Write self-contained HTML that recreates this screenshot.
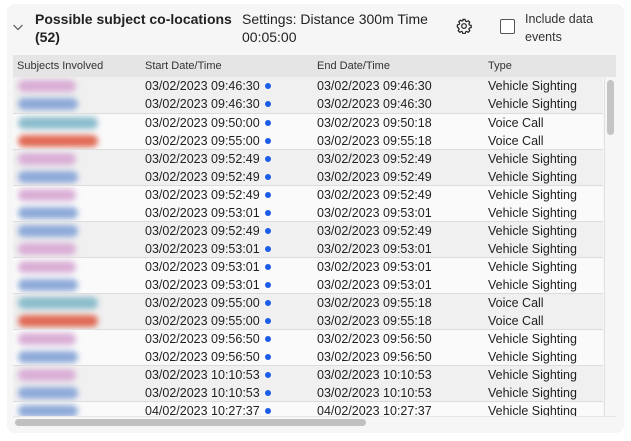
<!DOCTYPE html>
<html><head><style>
body{margin:0;width:631px;height:441px;background:#fff;font-family:"Liberation Sans",Arial,sans-serif;color:#222;position:relative;overflow:hidden}
.card{position:absolute;left:7px;top:4px;width:617px;height:429px;background:#f6f6f6;border-radius:8px}
.a{position:absolute;white-space:nowrap}
.hd{position:absolute;left:13px;top:55px;width:603px;height:22px;background:#e5e5e5;font-size:11px;color:#333}
.g{position:absolute;left:13px;width:590px;height:36px;border-top:1px solid #dcdcdc}
.r{position:absolute;font-size:12.5px;color:#1f1f1f;white-space:nowrap}
.dot{display:inline-block;width:6px;height:6px;border-radius:50%;background:#1a5ce6;margin-left:5px;vertical-align:1px}
.p{position:absolute;left:5px;height:12px;border-radius:6px;filter:blur(3px)}
.pk{background:#d9aed6;width:58px}.bl{background:#8ea9d8;width:60px}.tl{background:#8bbccc;width:80px}.rd{background:#e06a55;width:80px}
</style></head><body>
<div class="card"></div>
<svg class="a" style="left:12px;top:22px" width="12" height="10" viewBox="0 0 12 10"><path d="M1.5 3 L6 7.5 L10.5 3" fill="none" stroke="#555" stroke-width="1.2"/></svg>
<div class="a" style="left:35px;top:10px;font-size:14px;line-height:18px;font-weight:bold;color:#222">Possible subject co-locations<br>(52)</div>
<div class="a" style="left:242px;top:10px;font-size:14px;line-height:18px;color:#222">Settings: Distance 300m Time<br>00:05:00</div>
<svg class="a" style="left:456px;top:18px" width="16" height="16" viewBox="0 0 24 24"><path d="M10.3 2h3.4l.5 2.6 1.8.9 2.3-1.4 2.4 2.4-1.4 2.3.9 1.8 2.6.5v3.4l-2.6.5-.9 1.8 1.4 2.3-2.4 2.4-2.3-1.4-1.8.9-.5 2.6h-3.4l-.5-2.6-1.8-.9-2.3 1.4-2.4-2.4 1.4-2.3-.9-1.8L2 13.7v-3.4l2.6-.5.9-1.8-1.4-2.3 2.4-2.4 2.3 1.4 1.8-.9z" fill="none" stroke="#222" stroke-width="1.8" stroke-linejoin="round"/><circle cx="12" cy="12" r="3.5" fill="none" stroke="#222" stroke-width="1.8"/></svg>
<div class="a" style="left:500px;top:19px;width:13px;height:13px;border:1px solid #555;border-radius:2px;background:#fff"></div>
<div class="a" style="left:525px;top:10px;font-size:12.5px;line-height:18px;color:#333">Include data<br>events</div>
<div class="hd"><span class="a" style="left:4px;top:5px">Subjects Involved</span><span class="a" style="left:132px;top:5px">Start Date/Time</span><span class="a" style="left:304px;top:5px">End Date/Time</span><span class="a" style="left:475px;top:5px">Type</span></div>
<div id="rows"></div>
<div class="a" style="left:604px;top:77px;width:12px;height:339px;background:#f6f6f6;border-left:1px solid #e0e0e0"></div>
<div class="a" style="left:607px;top:80px;width:7px;height:55px;border-radius:4px;background:#c4c4c4"></div>
<div class="a" style="left:13px;top:416px;width:603px;height:12px;background:#f6f6f6;border-top:1px solid #e6e6e6"></div>
<div class="a" style="left:15px;top:419px;width:351px;height:7px;border-radius:4px;background:#c0c0c0"></div>
<script>
var g=[
["pk","bl","03/02/2023 09:46:30","03/02/2023 09:46:30","Vehicle Sighting","03/02/2023 09:46:30","03/02/2023 09:46:30","Vehicle Sighting"],
["tl","rd","03/02/2023 09:50:00","03/02/2023 09:50:18","Voice Call","03/02/2023 09:55:00","03/02/2023 09:55:18","Voice Call"],
["pk","bl","03/02/2023 09:52:49","03/02/2023 09:52:49","Vehicle Sighting","03/02/2023 09:52:49","03/02/2023 09:52:49","Vehicle Sighting"],
["pk","bl","03/02/2023 09:52:49","03/02/2023 09:52:49","Vehicle Sighting","03/02/2023 09:53:01","03/02/2023 09:53:01","Vehicle Sighting"],
["bl","pk","03/02/2023 09:52:49","03/02/2023 09:52:49","Vehicle Sighting","03/02/2023 09:53:01","03/02/2023 09:53:01","Vehicle Sighting"],
["pk","bl","03/02/2023 09:53:01","03/02/2023 09:53:01","Vehicle Sighting","03/02/2023 09:53:01","03/02/2023 09:53:01","Vehicle Sighting"],
["tl","rd","03/02/2023 09:55:00","03/02/2023 09:55:18","Voice Call","03/02/2023 09:55:00","03/02/2023 09:55:18","Voice Call"],
["pk","bl","03/02/2023 09:56:50","03/02/2023 09:56:50","Vehicle Sighting","03/02/2023 09:56:50","03/02/2023 09:56:50","Vehicle Sighting"],
["pk","bl","03/02/2023 10:10:53","03/02/2023 10:10:53","Vehicle Sighting","03/02/2023 10:10:53","03/02/2023 10:10:53","Vehicle Sighting"],
["bl","bl","04/02/2023 10:27:37","04/02/2023 10:27:37","Vehicle Sighting","",""," "]];
var h="";
g.forEach(function(x,i){var t=77+i*36;var ht=i==9?339-324:36;
h+='<div class="g" style="top:'+t+'px;height:'+ht+'px;overflow:hidden;background:'+(i%2?'#fafafa':'#f0f0f0')+';'+(i==0?'border-top:none':'')+'">';
h+='<div class="p '+x[0]+'" style="top:3px"></div>';
h+='<div class="r" style="left:132px;top:2px">'+x[2]+'<span class="dot"></span></div><div class="r" style="left:304px;top:2px">'+x[3]+'</div><div class="r" style="left:475px;top:2px">'+x[4]+'</div>';
if(i<9){h+='<div class="p '+x[1]+'" style="top:21px"></div>';
h+='<div class="r" style="left:132px;top:20px">'+x[5]+'<span class="dot"></span></div><div class="r" style="left:304px;top:20px">'+x[6]+'</div><div class="r" style="left:475px;top:20px">'+x[7]+'</div>';}
h+='</div>';});
document.getElementById("rows").innerHTML=h;
</script>
</body></html>
